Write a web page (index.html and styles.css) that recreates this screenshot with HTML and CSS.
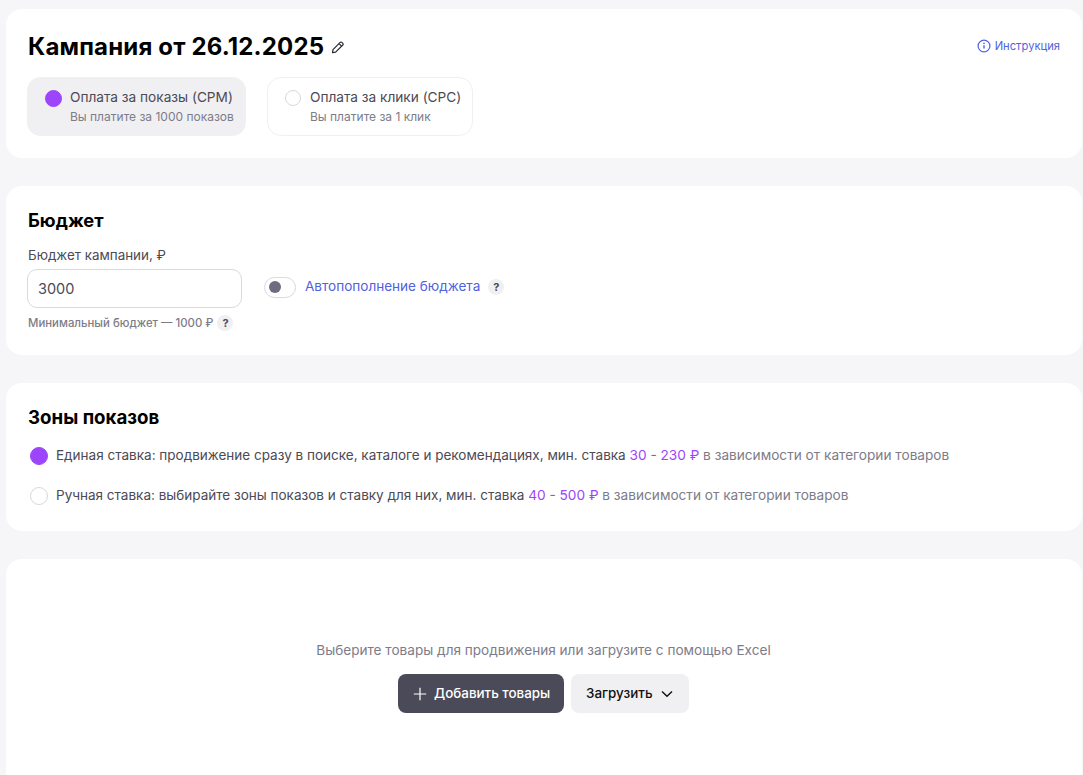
FILE: index.html
```html
<!DOCTYPE html>
<html lang="ru">
<head>
<meta charset="utf-8">
<title>Кампания</title>
<link rel="stylesheet" href="styles.css">
</head>
<body>
<main class="page">
  <section class="card card-head">
    <div class="title-row">
      <div class="title-wrap">
        <h1 class="title">Кампания от 26.12.2025</h1>
        <svg class="pencil" width="14" height="14" viewBox="0 0 14 14" fill="none" stroke="#2b2b33" stroke-width="1.2" stroke-linejoin="round"><path d="M2 9.6 9.2 2.4a1.2 1.2 0 0 1 1.7 0l.9.9a1.2 1.2 0 0 1 0 1.7L4.600 12.200 1.500 12.700Z"/><path d="M8 3.600 10.600 6.200"/></svg>
      </div>
      <a class="help-link">
        <svg width="14" height="14" viewBox="0 0 14 14" fill="none"><circle cx="7" cy="7" r="5.900" stroke="#4f62e0" stroke-width="1.200"/><path d="M7 6.300v3.200" stroke="#4f62e0" stroke-width="1.400"/><circle cx="7" cy="4.400" r=".8" fill="#4f62e0"/></svg>
        <span>Инструкция</span>
      </a>
    </div>
    <div class="pay-options">
      <div class="pay pay-on">
        <span class="radio radio-on"></span>
        <div class="pay-text"><div class="pay-name">Оплата за показы (CPM)</div><div class="pay-sub">Вы платите за 1000 показов</div></div>
      </div>
      <div class="pay pay-off">
        <span class="radio"></span>
        <div class="pay-text"><div class="pay-name">Оплата за клики (CPC)</div><div class="pay-sub">Вы платите за 1 клик</div></div>
      </div>
    </div>
  </section>

  <section class="card card-budget">
    <h2 class="heading">Бюджет</h2>
    <div class="field-label">Бюджет кампании, ₽</div>
    <div class="budget-row">
      <div class="input">3000</div>
      <div class="auto">
        <span class="toggle"><span class="knob"></span></span>
        <span class="auto-text">Автопополнение бюджета</span>
        <span class="q">?</span>
      </div>
    </div>
    <div class="hint"><span>Минимальный бюджет — 1000 ₽</span><span class="q">?</span></div>
  </section>

  <section class="card card-zones">
    <h2 class="heading heading-wide">Зоны показов</h2>
    <div class="zone zone-first">
      <span class="radio radio-on radio-big"></span>
      <p class="zone-text"><span class="dark">Единая ставка: продвижение сразу в поиске, каталоге и рекомендациях, мин. ставка</span> <span class="violet">30 - 230 ₽</span> в зависимости от категории товаров</p>
    </div>
    <div class="zone">
      <span class="radio radio-big"></span>
      <p class="zone-text"><span class="dark">Ручная ставка: выбирайте зоны показов и ставку для них, мин. ставка</span> <span class="violet">40 - 500 ₽</span> в зависимости от категории товаров</p>
    </div>
  </section>

  <section class="card card-goods">
    <p class="goods-text">Выберите товары для продвижения или загрузите с помощью Excel</p>
    <div class="goods-actions">
      <button class="btn btn-dark">
        <svg width="14" height="14" viewBox="0 0 14 14" fill="none" stroke="#fff" stroke-width="1.200"><path d="M7 .8v12.400M.8 7h12.400"/></svg>
        <span class="btn-label">Добавить товары</span>
      </button>
      <button class="btn btn-light">
        <span class="btn-label">Загрузить</span>
        <svg width="12" height="8" viewBox="0 0 12 8" fill="none" stroke="#111" stroke-width="1.400"><path d="M1 1.500 6 6.300l5-4.800"/></svg>
      </button>
    </div>
  </section>
</main>
</body>
</html>
```

FILE: styles.css
```css
* { box-sizing: border-box; }
html, body { height: 100%; }
body {
  margin: 0;
  background: #f6f6f9;
  font-family: Inter, "Noto Sans", sans-serif;
  color: #4b4a55;
  overflow: hidden;
}
p, h1, h2 { margin: 0; }
.page {
  display: flex;
  flex-direction: column;
  gap: 28px;
  padding: 9px 1px 0 6px;
}
.card { background: #fff; border-radius: 16px; padding: 0 22px 0 21px; }
.card-head { height: 149px; padding-top: 22px; }
.title-row { display: flex; justify-content: space-between; align-items: center; height: 32px; }
.title-wrap { display: flex; align-items: center; gap: 7px; margin-left: 1px; }
.title { font-size: 24px; line-height: 32px; font-weight: 700; color: #000; letter-spacing: .17px; }
.help-link { display: flex; align-items: center; gap: 4px; font-size: 11.200px; color: #4f62e0; margin-top: -2px; }
.pay-options { display: flex; gap: 21px; margin-top: 14px; }
.pay { height: 59px; border-radius: 14px; display: flex; align-items: flex-start; padding-top: 13px; }
.pay-on { width: 219px; background: #f0f0f3; padding-left: 18px; gap: 8px; }
.pay-off { width: 206px; border: 1px solid #f0f0f3; padding-left: 17px; padding-top: 12px; gap: 9px; }
.radio {
  flex: none;
  width: 16px;
  height: 16px;
  border-radius: 50%;
  border: 1px solid #d8d8dc;
  background: #fff;
}
.radio-on { background: #9d45fb; border-color: #9d45fb; width: 17px; height: 17px; }
.radio-big { width: 18px; height: 18px; }
.pay-text { margin-top: -2px; }
.pay-name { font-size: 13.650px; line-height: 18px; color: #4b4a55; white-space: nowrap; }
.pay-sub { font-size: 12px; line-height: 16px; margin-top: 3px; color: #7d7c88; white-space: nowrap; }
.card-budget { height: 169px; padding-top: 22px; }
.heading { font-size: 18.300px; line-height: 24px; font-weight: 700; color: #000; margin-left: 1px; }
.heading-wide { font-size: 18.700px; }
.field-label { font-size: 13.400px; line-height: 18px; margin-top: 14px; margin-left: 1px; color: #4b4a55; }
.budget-row { display: flex; align-items: center; gap: 22px; margin-top: 5px; }
.input {
  width: 215px;
  height: 39px;
  border: 1px solid #d9d9de;
  border-radius: 10px;
  padding-left: 10px;
  font-size: 14.500px;
  line-height: 37px;
  color: #4b4a55;
}
.auto { display: flex; align-items: center; margin-top: -3px; }
.toggle {
  display: flex;
  align-items: center;
  width: 32px;
  height: 21px;
  border: 1px solid #d9d9de;
  border-radius: 11px;
  padding-left: 4px;
}
.knob { width: 12px; height: 12px; border-radius: 50%; background: #6f6c80; }
.auto-text { font-size: 13.550px; color: #4f62e0; margin: -2px 0 0 9px; white-space: nowrap; }
.q {
  display: inline-flex;
  align-items: center;
  justify-content: center;
  width: 16px;
  height: 16px;
  border-radius: 50%;
  background: #f0f0f3;
  font-size: 11px;
  font-weight: 700;
  color: #4b4a55;
}
.auto .q { margin-left: 8px; }
.hint { display: flex; align-items: center; gap: 4px; margin: 7px 0 0 1px; font-size: 11.400px; line-height: 16px; font-weight: 500; color: #7d7c88; }
.card-zones { height: 148px; padding-top: 23px; }
.zone { display: flex; align-items: center; gap: 8px; margin: 16px 0 0 3px; height: 20px; }
.zone + .zone { margin-top: 20px; }
.zone-text { font-size: 13.650px; line-height: 20px; margin-top: -2px; color: #7d7c88; white-space: nowrap; }
.dark { color: #4b4a55; font-size: 13.520px; }
.violet { color: #9d45fb; }
.card-goods {
  height: 230px;
  display: flex;
  flex-direction: column;
  align-items: center;
  padding-top: 81px;
}
.goods-text { font-size: 13.600px; line-height: 20px; color: #7d7c88; }
.goods-actions { display: flex; gap: 7px; margin-top: 14px; }
.btn {
  display: flex;
  align-items: center;
  height: 39px;
  border: 0;
  border-radius: 8px;
  font: 500 13.400px Inter, "Noto Sans", sans-serif;
}
.btn-label { margin-top: -2px; }
.btn-dark { width: 166px; background: #4b4a58; color: #fff; padding-left: 15px; gap: 7px; }
.btn-light { width: 118px; background: #f0f0f3; color: #111; padding-left: 15px; gap: 8px; }
```
